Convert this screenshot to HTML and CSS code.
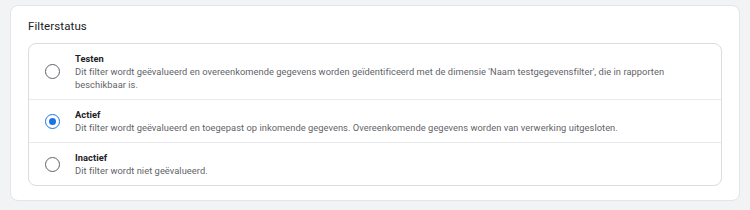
FILE: index.html
```html
<!DOCTYPE html>
<html lang="nl">
<head>
    <meta charset="UTF-8">
    <title>Filterstatus</title>
    <link rel="stylesheet" href="styles.css">
</head>
<body>
    <section class="card">
        <h2 class="card-title">Filterstatus</h2>
        <ul class="options">
            <li class="option">
                <span class="radio"></span>
                <div class="option-text">
                    <div class="option-name">Testen</div>
                    <div class="option-desc">Dit filter wordt geëvalueerd en overeenkomende gegevens worden geïdentificeerd met de dimensie 'Naam testgegevensfilter', die in rapporten beschikbaar is.</div>
                </div>
            </li>
            <li class="option">
                <span class="radio checked"></span>
                <div class="option-text">
                    <div class="option-name">Actief</div>
                    <div class="option-desc">Dit filter wordt geëvalueerd en toegepast op inkomende gegevens. Overeenkomende gegevens worden van verwerking uitgesloten.</div>
                </div>
            </li>
            <li class="option">
                <span class="radio"></span>
                <div class="option-text">
                    <div class="option-name">Inactief</div>
                    <div class="option-desc">Dit filter wordt niet geëvalueerd.</div>
                </div>
            </li>
        </ul>
    </section>
</body>
</html>
```

FILE: styles.css
```css
body {
    margin: 0;
    padding: 5px 10px 10px;
    background-color: #f1f3f4;
    font-family: Roboto, "Liberation Sans", Arial, sans-serif;
    color: #202124;
}
.card {
    background-color: #fff;
    border: 1px solid #e3e5e8;
    border-radius: 8px;
    padding: 11px 17px 14px;
}
.card-title {
    margin: 0 0 8px;
    font-size: 11.5px;
    font-weight: 400;
    line-height: 18px;
    letter-spacing: 0.1px;
}
.options {
    list-style: none;
    margin: 0;
    padding: 0;
    border: 1px solid #dadce0;
    border-radius: 8px;
}
.option {
    display: flex;
    align-items: center;
    padding: 8px 40px 8px 16px;
    border-top: 1px solid #e8eaed;
}
.option:first-child {
    border-top: none;
}
.radio {
    flex: none;
    width: 13px;
    height: 13px;
    border: 1.5px solid #5f6368;
    border-radius: 50%;
    margin-right: 15px;
    position: relative;
}
.radio.checked {
    border-color: #1a73e8;
}
.radio.checked::after {
    content: "";
    position: absolute;
    left: 3px;
    top: 3px;
    width: 7px;
    height: 7px;
    border-radius: 50%;
    background-color: #1a73e8;
}
.option-text {
    font-size: 9.3px;
    line-height: 13px;
    letter-spacing: 0.05px;
}
.option-name {
    font-weight: 700;
}
.option-desc {
    color: #5f6368;
}
```
